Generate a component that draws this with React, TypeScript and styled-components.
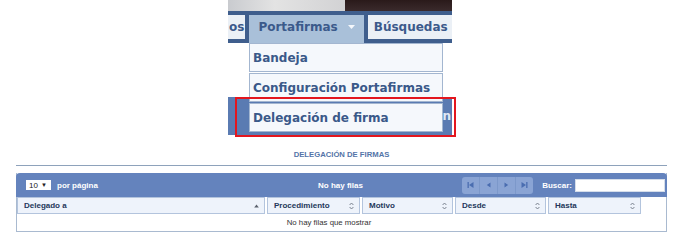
import styled, { createGlobalStyle } from 'styled-components'

const GlobalStyle = createGlobalStyle`
  html, body { margin: 0; padding: 0; background: #fff; }
  body {
    width: 682px;
    height: 243px;
    overflow: hidden;
    font-family: "Liberation Sans", Arial, sans-serif;
  }
`

const Page = styled.div`
  display: flex;
  flex-direction: column;
  width: 682px;
`

/* ---------- cropped menu screenshot ---------- */

const Shot = styled.div`
  position: relative;
  width: 224px;
  height: 137px;
  margin-left: 228px;
  display: flex;
  flex-direction: column;
  font-family: "DejaVu Sans", Verdana, sans-serif;
`

const TopStrip = styled.div`
  display: flex;
  height: 11px;
`

const StripPart = styled.div<{ $dark?: boolean }>`
  flex: ${({ $dark }) => ($dark ? '1' : '0 0 117px')};
  background: ${({ $dark }) =>
    $dark ? 'linear-gradient(#2a1a1a, #3a2a2c)' : 'linear-gradient(90deg, #c9cbcf, #e3e3e3 40%, #d2d2d4)'};
`

const MenuBar = styled.div`
  display: flex;
  align-items: flex-start;
  gap: 4px;
  height: 32px;
  padding-top: 4px;
  box-sizing: border-box;
  background: #3f5e8d;
  overflow: hidden;
`

const Tab = styled.div<{ $active?: boolean; $pad?: number }>`
  display: flex;
  align-items: center;
  flex: 0 0 auto;
  height: ${({ $active }) => ($active ? '28px' : '24px')};
  padding: 0 ${({ $pad }) => $pad ?? 6}px;
  padding-bottom: ${({ $active }) => ($active ? '4px' : '0')};
  box-sizing: border-box;
  background: ${({ $active }) => ($active ? '#a9c0d9' : '#ebf0f6')};
  color: #3b5a8b;
  font-size: 12px;
  font-weight: bold;
  white-space: nowrap;
`

const Caret = styled.svg`
  margin-left: 10px;
`

const Under = styled.div`
  flex: 1;
  display: flex;
  flex-direction: column;
  padding-top: 54px;
`

const BlueBar = styled.div`
  height: 38px;
  background: #5a7bb2;
  display: flex;
  align-items: center;
  justify-content: flex-end;
  padding-right: 1px;
  color: #dfe7f3;
  font-size: 12px;
  font-weight: bold;
  white-space: nowrap;
`

const Dropdown = styled.div`
  position: absolute;
  left: 21px;
  top: 43px;
  width: 194px;
  display: flex;
  flex-direction: column;
  gap: 1px;
`

const DropItem = styled.div`
  height: 29px;
  box-sizing: border-box;
  border: 1px solid #a3b6d0;
  background: #f5f8fc;
  padding-left: 3px;
  display: flex;
  align-items: center;
  color: #3a5989;
  font-size: 12px;
  font-weight: bold;
  white-space: nowrap;
`

const Highlight = styled.div`
  position: absolute;
  left: 7px;
  top: 97px;
  width: 221px;
  height: 40px;
  box-sizing: border-box;
  border: 2px solid #e3161e;
`

/* ---------- delegation table ---------- */

const Section = styled.div`
  display: flex;
  flex-direction: column;
  padding: 0 15px 0 16px;
`

const Title = styled.div`
  padding: 13px 0 5px;
  line-height: 10px;
  border-bottom: 1px solid #8ea2bb;
  text-align: center;
  color: #5474a8;
  font-size: 7.7px;
  font-weight: bold;
`

const TableBox = styled.div`
  margin-top: 7px;
  border: 1px solid #a9bad0;
  border-top: none;
  display: flex;
  flex-direction: column;
`

const HeadBar = styled.div`
  display: flex;
  align-items: center;
  height: 24px;
  margin: 0 -1px;
  border-radius: 4px 4px 0 0;
  background: #6483bd;
  color: #fff;
  font-size: 8px;
  font-weight: bold;
`

const LenGroup = styled.div`
  flex: 0 0 302px;
  display: flex;
  align-items: center;
  padding-left: 10px;
  box-sizing: border-box;
`

const LenSelect = styled.div`
  display: flex;
  align-items: center;
  justify-content: space-between;
  width: 25px;
  height: 10px;
  padding: 0 4px 0 3px;
  margin-right: 6px;
  box-sizing: border-box;
  background: #fff;
  color: #222;
  font-weight: normal;
  font-size: 8px;
`

const Info = styled.div`
  flex: 1;
`

const Pager = styled.div`
  display: flex;
  height: 17px;
  margin-right: 9px;
  border-radius: 3px;
  overflow: hidden;
  background: #8aa4d4;
`

const PageBtn = styled.div`
  width: 17px;
  display: flex;
  align-items: center;
  justify-content: center;
  border-left: 1px solid #7c98ca;
  &:first-child { border-left: none; }
`

const SearchInput = styled.div`
  width: 90px;
  height: 13px;
  margin: 0 2px 0 3px;
  background: #fff;
  border: 1px solid #d6deea;
  box-sizing: border-box;
`

const ColRow = styled.div`
  display: flex;
  gap: 2px;
`

const ColHead = styled.div<{ $w: number }>`
  flex: 0 0 ${({ $w }) => $w}px;
  height: 17px;
  box-sizing: border-box;
  border: 1px solid #b3c4dd;
  background: #eef3fb;
  display: flex;
  align-items: center;
  justify-content: space-between;
  padding: 0 5px 0 6px;
  color: #24375a;
  font-size: 8px;
  font-weight: bold;
`

const EmptyRow = styled.div`
  width: 624px;
  height: 17px;
  display: flex;
  align-items: center;
  justify-content: center;
  color: #333;
  font-size: 7.8px;
`

function SortIcon({ up }: { up?: boolean }) {
  if (up) {
    return (
      <svg width="5" height="4" viewBox="0 0 5 4">
        <path d="M2.5 0.5 L4.8 3.6 H0.2 Z" fill="#59606c" />
      </svg>
    )
  }
  return (
    <svg width="5" height="8" viewBox="0 0 5 8">
      <path d="M0.6 3 L2.5 1 L4.4 3 M0.6 5 L2.5 7 L4.4 5" stroke="#6f7784" strokeWidth="0.9" fill="none" />
    </svg>
  )
}

function PagerIcon({ kind }: { kind: 'first' | 'prev' | 'next' | 'last' }) {
  const c = '#4a6db0'
  return (
    <svg width="7" height="6" viewBox="0 0 7 6">
      {kind === 'first' && (
        <>
          <rect x="0.5" y="0" width="1.3" height="6" fill={c} />
          <path d="M6.5 0 V6 L2 3 Z" fill={c} />
        </>
      )}
      {kind === 'prev' && <path d="M5.5 0.5 V5.5 L1.8 3 Z" fill={c} />}
      {kind === 'next' && <path d="M1.5 0.5 V5.5 L5.2 3 Z" fill={c} />}
      {kind === 'last' && (
        <>
          <path d="M0.5 0 V6 L5 3 Z" fill={c} />
          <rect x="5.2" y="0" width="1.3" height="6" fill={c} />
        </>
      )}
    </svg>
  )
}

const columns = [
  { label: 'Delegado a', w: 248, up: true },
  { label: 'Procedimiento', w: 93 },
  { label: 'Motivo', w: 91 },
  { label: 'Desde', w: 91 },
  { label: 'Hasta', w: 93 },
]

export default function App() {
  return (
    <Page>
      <GlobalStyle />
      <Shot>
        <TopStrip>
          <StripPart />
          <StripPart $dark />
        </TopStrip>
        <MenuBar>
          <Tab $pad={1}>os</Tab>
          <Tab $active $pad={9}>
            Portafirmas
            <Caret width="7" height="4" viewBox="0 0 7 4">
              <path d="M0 0 H7 L3.5 4 Z" fill="#f4f7fb" />
            </Caret>
          </Tab>
          <Tab>Búsquedas</Tab>
        </MenuBar>
        <Under>
          <BlueBar>n</BlueBar>
        </Under>
        <Dropdown>
          <DropItem>Bandeja</DropItem>
          <DropItem>Configuración Portafirmas</DropItem>
          <DropItem>Delegación de firma</DropItem>
        </Dropdown>
        <Highlight />
      </Shot>

      <Section>
        <Title>DELEGACIÓN DE FIRMAS</Title>
        <TableBox>
          <HeadBar>
            <LenGroup>
              <LenSelect>
                <span>10</span>
                <span style={{ fontSize: '6px' }}>▼</span>
              </LenSelect>
              por página
            </LenGroup>
            <Info>No hay filas</Info>
            <Pager>
              <PageBtn><PagerIcon kind="first" /></PageBtn>
              <PageBtn><PagerIcon kind="prev" /></PageBtn>
              <PageBtn><PagerIcon kind="next" /></PageBtn>
              <PageBtn><PagerIcon kind="last" /></PageBtn>
            </Pager>
            Buscar:
            <SearchInput />
          </HeadBar>
          <ColRow>
            {columns.map((c) => (
              <ColHead key={c.label} $w={c.w}>
                {c.label}
                <SortIcon up={c.up} />
              </ColHead>
            ))}
          </ColRow>
          <EmptyRow>No hay filas que mostrar</EmptyRow>
        </TableBox>
      </Section>
    </Page>
  )
}
